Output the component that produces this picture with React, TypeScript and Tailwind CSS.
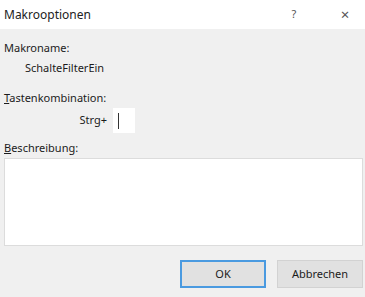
import React from "react"

export default function App() {
	return (
		<div className="w-[365px] h-[297px] flex flex-col bg-[#f0f0f0] text-[11px] text-[#1b1b1b] font-['Noto_Sans',sans-serif] overflow-hidden">
			<div className="h-[29px] bg-white flex items-center pl-[4px]">
				<span className="text-[12px] text-[#222]">Makrooptionen</span>
				<span className="ml-auto w-[20px] text-center text-[11px] text-[#555] mr-[31px]">?</span>
				<span className="w-[20px] text-center text-[15px] text-[#555] mr-[10px]">×</span>
			</div>

			<div className="flex flex-col px-[4px]">
				<div className="mt-[11px] h-[16px] leading-[16px]">Makroname:</div>
				<div className="mt-[4px] ml-[21px] h-[16px] leading-[16px]">SchalteFilterEin</div>
				<div className="mt-[14px] h-[16px] leading-[16px]">
					<u>T</u>astenkombination:
				</div>
				<div className="mt-[2px] flex items-center h-[25px]">
					<span className="w-[105px] pr-[2px] text-right">Strg+</span>
					<div className="ml-[4px] w-[22px] h-[25px] bg-white flex items-center">
						<div className="ml-[5px] w-px h-[16px] bg-[#333]" />
					</div>
				</div>
				<div className="mt-[7px] h-[16px] leading-[16px]">
					<u>B</u>eschreibung:
				</div>
				<div className="mt-[2px] w-[359px] h-[88px] bg-white border border-[#dcdcdc]" />
				<div className="mt-[14px] flex justify-end gap-[11px] mr-[-2px]">
					<button className="w-[86px] h-[28px] bg-[#e1e1e1] border-2 border-[#4a9ae0] text-[#1b1b1b]">
						OK
					</button>
					<button className="w-[86px] h-[28px] bg-[#e1e1e1] border border-[#d2d2d2] text-[#1b1b1b]">
						Abbrechen
					</button>
				</div>
			</div>
		</div>
	)
}
